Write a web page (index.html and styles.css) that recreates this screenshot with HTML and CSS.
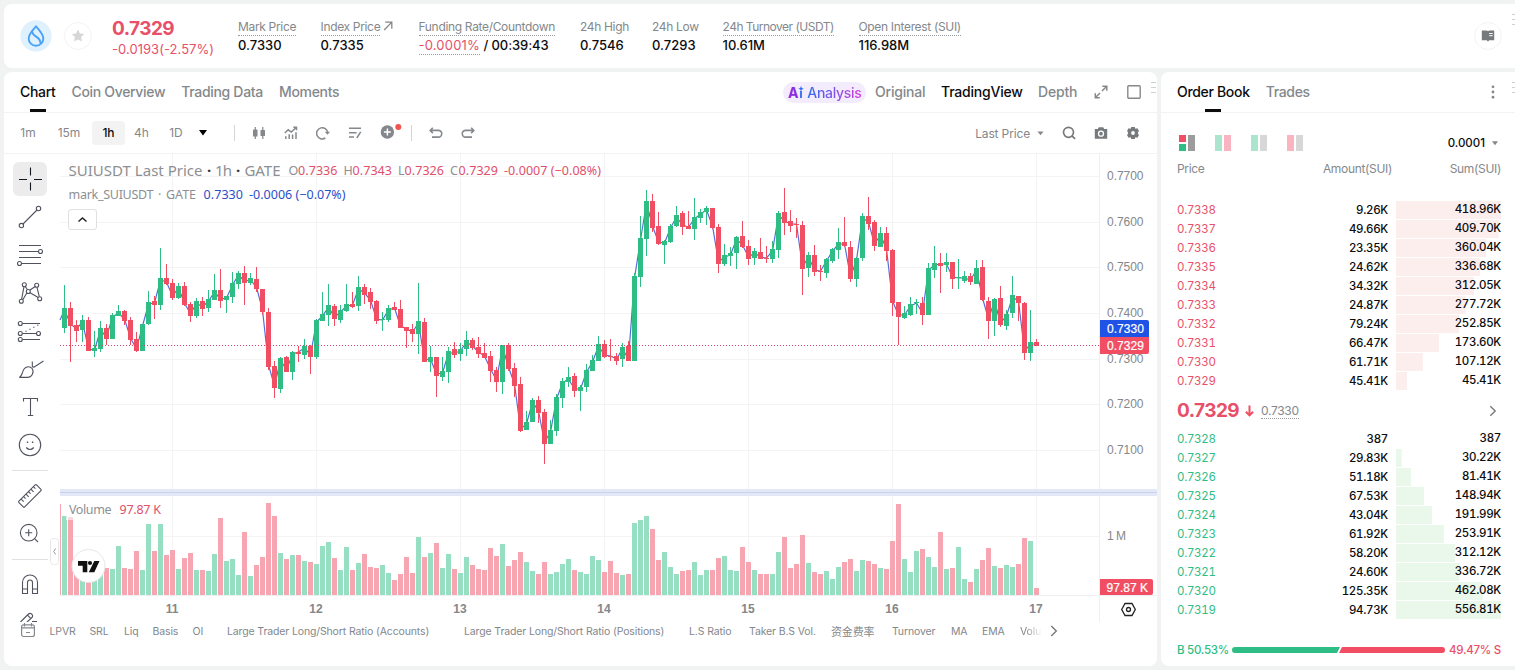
FILE: index.html
```html
<!DOCTYPE html>
<html lang="en">
<head>
<meta charset="utf-8">
<title>SUIUSDT 0.7329</title>
<link rel="stylesheet" href="styles.css">
</head>
<body>
<header class="card ticker">
  <svg class="coin" width="32" height="32" viewBox="0 0 32 32"><circle cx="16" cy="16" r="15.7" fill="#dff1fd"/><g fill="none" stroke="#4ba2f5" stroke-width="1.9" stroke-linejoin="round"><path d="M16 6.2c2.600 3.700 7.300 7.700 7.300 12.200a7.300 7.300 0 0 1-14.600 0C8.700 13.900 13.400 9.900 16 6.200z"/><path d="M12.600 11.600c-1.500 5 8.800 4.600 7.800 12.100"/></g></svg>
  <span class="round star"><svg width="14" height="14" viewBox="0 0 14 14"><path d="M7 .6l1.900 3.900 4.400.6-3.200 3 .8 4.300L7 10.400l-3.900 2 .8-4.300-3.200-3 4.400-.6z" fill="#d6d6d6"/></svg></span>
  <div class="last"><b>0.7329</b><span>-0.0193(-2.57%)</span></div>
  <div class="stats">
    <div><label class="dot">Mark Price</label><p>0.7330</p></div>
    <div><label><span class="dot">Index Price</span> <svg width="10" height="10" viewBox="0 0 10 10"><path d="M1.200 9L8.600 1.400M2.200 1.200h6.600v6.500" fill="none" stroke="#84888c" stroke-width="1.300"/></svg></label><p>0.7335</p></div>
    <div><label class="dot">Funding Rate/Countdown</label><p class="fund"><span class="dot red">-0.0001%</span> <span>/ 00:39:43</span></p></div>
    <div><label>24h High</label><p>0.7546</p></div>
    <div><label>24h Low</label><p>0.7293</p></div>
    <div><label class="dot tight">24h Turnover (USDT)</label><p>10.61M</p></div>
    <div><label class="dot">Open Interest (SUI)</label><p>116.98M</p></div>
  </div>
  <span class="round guide"><svg width="14" height="12" viewBox="0 0 14 12"><path d="M.8.600h4.400q1.300 0 1.800.7.500-.7 1.800-.7h4.400v9.600H8.300L7 11.400l-1.300-1.200H.8z" fill="#777a7d"/><path d="M8.200 3.500h3.500M8.200 5.700h3.500" stroke="#fff"/></svg></span>
  <svg class="grip" width="5" height="11" viewBox="0 0 5 11"><path d="M0 .5h5M0 5.500h5M0 10.500h5" stroke="#cfd2d5"/></svg>
</header>

<main>
<section class="card chart-card">
  <nav class="tabs">
    <a class="on">Chart</a><a>Coin Overview</a><a>Trading Data</a><a>Moments</a>
    <div class="views">
      <span class="ai"><span class="ai-logo">A<svg width="6" height="12" viewBox="0 0 6 12"><path d="M3 5v7" stroke="#2f6df0" stroke-width="1.800"/><path d="M3 0l.8 2 2 .8-2 .8L3 5.500l-.8-1.900-2-.8 2-.8z" fill="#2f6df0"/></svg></span><span class="ai-word">Analysis</span></span>
      <span class="v-orig">Original</span><span class="v-tv">TradingView</span><span class="v-depth">Depth</span>
      <svg class="v-exp" width="14" height="14" viewBox="0 0 14 14" fill="none" stroke="#84888c" stroke-width="1.500"><path d="M8 6l4.500-4.500M8.300 1.300h4.500v4.500M6 8L1.500 12.500M1.300 8.200v4.500h4.500"/></svg>
      <svg class="v-sq" width="14" height="14" viewBox="0 0 14 14"><rect x=".8" y=".8" width="12.400" height="12.400" rx="1" fill="none" stroke="#84888c" stroke-width="1.400"/></svg>
      <svg class="v-grip" width="5" height="11" viewBox="0 0 5 11"><path d="M0 .5h5M0 5.500h5M0 10.500h5" stroke="#cfd2d5"/></svg>
    </div>
  </nav>
  <div class="bar">
    <div class="frames"><span>1m</span><span>15m</span><span class="sel">1h</span><span>4h</span><span>1D</span></div>
    <svg class="caret" width="8" height="6" viewBox="0 0 8 6"><path d="M0 0h8L4 5.500z"/></svg>
    <i class="vr"></i>
    <svg width="14" height="14" viewBox="0 0 14 14" fill="#84888c"><rect x="1" y="3.500" width="4.500" height="7" rx=".6"/><rect x="2.700" y="1" width="1.200" height="12"/><rect x="8.500" y="4" width="4.500" height="6" rx=".6"/><rect x="10.200" y="1" width="1.200" height="12"/></svg>
    <svg width="14" height="14" viewBox="0 0 14 14" fill="none" stroke="#84888c" stroke-width="1.500"><path d="M.8 7l3.400-3.200 3 2.200 5-4.500M9.300 1.300h3.200v3M1.800 10.200V13M5.200 8.200V13M8.600 8.600V13M12 6.200V13"/></svg>
    <svg width="14" height="14" viewBox="0 0 14 14" fill="none" stroke="#84888c" stroke-width="1.500"><path d="M9.300 12a5.600 5.600 0 1 1 2.500-5"/><path d="M8.800 5.700h5.200l-2.500 3.100z" fill="#84888c" stroke="none"/></svg>
    <svg width="14" height="14" viewBox="0 0 14 14" fill="none" stroke="#84888c" stroke-width="1.500"><path d="M1 2.300h12M1 6.700h7.600M1 11.100h5M8.800 12l3.900-6.200"/></svg>
    <svg class="plus" width="23" height="18" viewBox="0 0 23 18"><circle cx="7.400" cy="11" r="6.700" fill="#84888c"/><path d="M7.400 7.500v7M3.900 11h7" stroke="#fff" stroke-width="1.500"/><circle cx="18.300" cy="6" r="3" fill="#f0564f"/></svg>
    <i class="vr two"></i>
    <svg width="14" height="12" viewBox="0 0 14 12" fill="none" stroke="#84888c" stroke-width="1.600"><path d="M3.800.7L1.200 3.400l2.600 2.700M1.400 3.400h8a3.300 3.300 0 0 1 0 6.700H3"/></svg>
    <svg width="14" height="12" viewBox="0 0 14 12" fill="none" stroke="#84888c" stroke-width="1.600"><path d="M10.200.7l2.600 2.700-2.600 2.700M12.600 3.400h-8a3.300 3.300 0 0 0 0 6.700H11"/></svg>
    <div class="right">
      <span>Last Price</span>
      <svg width="7" height="5" viewBox="0 0 7 5"><path d="M.5.5h6l-3 3.700z" fill="#84888c"/></svg>
      <svg width="14" height="14" viewBox="0 0 14 14" fill="none" stroke="#777a7d" stroke-width="1.700"><circle cx="6.500" cy="6.300" r="5"/><path d="M10 9.800l3 3"/></svg>
      <svg width="14" height="14" viewBox="0 0 14 14"><path d="M.8 3h3l1-1.800h4.400l1 1.800h3v9.800H.8z" fill="#777a7d"/><circle cx="7" cy="7.700" r="2.500" fill="none" stroke="#fff" stroke-width="1.300"/></svg>
      <svg width="14" height="14" viewBox="0 0 14 14"><path d="M5.200 1h3.600l.5 1.700 2.100-.4 1.500 2.500L11.800 7l1.100 2.200-1.500 2.500-2.100-.4-.5 1.700H5.200l-.5-1.700-2.100.4L1.100 9.200 2.200 7 1.100 4.800l1.500-2.500 2.100.4z" fill="#777a7d"/><circle cx="7" cy="7" r="1.900" fill="#fff"/></svg>
    </div>
  </div>
  <div class="body">
    <div class="tools">
      <svg class="active" viewBox="0 0 34 34"><path d="M17.500 5.500v8M17.500 20.500v8M6 17.500h8M21 17.500h8"/></svg>
      <svg viewBox="0 0 34 34"><path d="M10 24L24 10"/><circle cx="8.400" cy="25.600" r="2.200"/><circle cx="25.500" cy="8.500" r="2.200"/></svg>
      <svg viewBox="0 0 34 34"><path d="M6 7.500h22M6 13.500h19.500M6 19.500h22M8.500 25.500H28"/><circle cx="27.500" cy="13.500" r="2"/><circle cx="6.500" cy="25.500" r="2"/></svg>
      <svg viewBox="0 0 34 34"><path d="M8.600 23.300L11 10.700M12.300 10.500l2 3M9.800 23.700l4-6.700M17 14l5.200-3.500M17 16.800l8.200 4.700M24 11.300l2.300 9.400"/><circle cx="8.300" cy="25.300" r="2"/><circle cx="11.300" cy="8.700" r="2"/><circle cx="15.300" cy="15.500" r="2"/><circle cx="23.700" cy="9.300" r="2"/><circle cx="26.700" cy="22.700" r="2"/></svg>
      <svg viewBox="0 0 34 34"><path d="M9.500 9.500h17.500M9.500 19.500h14M9.500 25.500h17.500"/><path d="M12.500 17.500L27 10" stroke-dasharray="1.200 3.200"/><circle cx="7.300" cy="9.500" r="2"/><circle cx="7.300" cy="19.500" r="2"/><circle cx="25.500" cy="19.500" r="2"/><circle cx="7.300" cy="25.500" r="2"/></svg>
      <svg viewBox="0 0 34 34"><path d="M6.300 25.400c3-1.200 2.800-5.500 4.600-8.200 2-3 6.300-3.200 8.200-.7 2.200 3 .4 8.700-4.600 8.900zM19.300 9.500v4.300q.3 1.700 2 1.200L30.500 9"/></svg>
      <svg viewBox="0 0 34 34"><path d="M10.500 11.500v-3h14v3M17.500 8.500v17M14.800 25.500h5.400"/></svg>
      <svg viewBox="0 0 34 34"><circle cx="17" cy="17" r="10.700"/><path d="M13.200 19.500q3.800 4 7.600 0"/><path d="M13.800 14.300h1.400M18.900 14.300h1.400" stroke-width="1.400"/></svg>
      <hr>
      <svg viewBox="0 0 34 34"><g transform="rotate(-45 17 17)"><rect x="4.500" y="12.800" width="25" height="8.200" rx="1"/><path d="M8.500 13v3.600M12 13v2.700M15.500 13v3.600M19 13v2.700M22.500 13v3.600M26 13v2.700"/></g></svg>
      <svg viewBox="0 0 34 34"><circle cx="15.700" cy="15.700" r="8.300"/><path d="M21.800 21.800l3.200 3.200M15.700 12.200v7M12.200 15.700h7"/></svg>
      <hr>
      <svg viewBox="0 0 34 34"><path d="M9.500 25.500v-11a7.500 7.500 0 0 1 15 0v11h-5v-11a2.500 2.500 0 0 0-5 0v11zM9.500 21h5M19.500 21h5"/></svg>
      <svg viewBox="0 0 34 34"><path d="M7.500 16l8-8q1.500-1.500 3.200.2t.2 3.300l-6.400 6M14.500 9.200l3.200 3.200M19 15.500h5"/></svg>
    </div>
    <svg class="plot" id="plot" width="1107" height="468" viewBox="50 154 1107 468">
      <g id="grid" stroke="#f4f4f5"></g>
      <path d="M1099.500 154V622M60 595.500h1097" stroke="#eeeff0"/>
      <g id="volume"></g>
      <rect x="60" y="489" width="1097" height="7" fill="#e2e8f7"/><path d="M60 492.500h1097" stroke="#c9d2ea"/>
      <path id="mark" fill="none" stroke="#5470d8" stroke-width="1.200"/>
      <g id="candles"></g>
      <path d="M60 345.500h1039" stroke="#d9456a" stroke-dasharray="1 2"/>
      <g class="legend">
        <text x="68.500" y="176" class="t15" textLength="134">SUIUSDT Last Price</text><text x="207" y="176" class="t15 dk">·</text><text x="215" y="176" class="t15" textLength="17">1h</text><text x="236" y="176" class="t15 dk">·</text><text x="244.500" y="176" class="t15" textLength="36">GATE</text>
        <text x="288.500" y="175" class="t13" textLength="9.500">O</text><text x="298" y="175" class="t13 r" textLength="39.500">0.7336</text>
        <text x="343.500" y="175" class="t13" textLength="9">H</text><text x="352.500" y="175" class="t13 r" textLength="39.500">0.7343</text>
        <text x="398" y="175" class="t13" textLength="6.500">L</text><text x="404.500" y="175" class="t13 r" textLength="39.500">0.7326</text>
        <text x="450" y="175" class="t13" textLength="8.500">C</text><text x="458.500" y="175" class="t13 r" textLength="39.500">0.7329</text>
        <text x="504" y="175" class="t13 r" textLength="97">-0.0007 (−0.08%)</text>
        <text x="68.500" y="199" class="t13" textLength="85">mark_SUIUSDT</text><text x="158" y="199" class="t13">·</text><text x="166" y="199" class="t13" textLength="30">GATE</text>
        <text x="203.500" y="199" class="t13 b" textLength="39.500">0.7330</text><text x="249" y="199" class="t13 b" textLength="96.500">-0.0006 (−0.07%)</text>
        <rect x="68.500" y="209.500" width="28" height="20" rx="2.500" fill="#fff" stroke="#dfe0e2"/><path d="M78.500 221.500l4-3.500 4 3.500" fill="none" stroke="#222" stroke-width="1.500"/>
        <rect x="66" y="500" width="98" height="20" fill="#fff" opacity=".6"/>
        <text x="69" y="514" class="t13" textLength="42.500">Volume</text><text x="119.500" y="514" class="t13 r" textLength="41.500">97.87 K</text>
      </g>
      <circle cx="88.500" cy="566" r="16.500" fill="#fff" stroke="#e6e6e8"/>
      <path d="M78 561h9.300v11.300h-4.600v-6.600H78zM94.300 561H99.500l-5.200 11.300h-5.500z" fill="#111"/><circle cx="90" cy="563" r="2.100" fill="#111"/>
      <g><rect x="50.500" y="538.500" width="8" height="26" rx="3" fill="#fff" stroke="#e6e7e9"/><path d="M55.700 548.500l-2 3 2 3" fill="none" stroke="#999"/></g>
      <g id="axis" class="axis"></g>
      <path d="M1100 320h47q2 0 2 2v15h-49z" fill="#1e53e5"/><path d="M1100 337h49v15q0 2-2 2h-47z" fill="#f24e63"/>
      <g class="tag"><text x="1107" y="333" textLength="37">0.7330</text><text x="1107" y="350" textLength="37">0.7329</text>
      <path d="M1100 579h51q2 0 2 2v12q0 2-2 2h-51z" fill="#f24e63"/><text x="1106.500" y="592" textLength="41.500">97.87 K</text></g>
      <path d="M1121.700 609.500l3.300-6h7l3.300 6-3.300 6h-7z" fill="none" stroke="#222" stroke-width="1.300"/><circle cx="1128.500" cy="609.500" r="2" fill="none" stroke="#222" stroke-width="1.300"/>
    </svg>
  </div>
  <div class="inds">
    <svg class="cal" width="16" height="16" viewBox="0 0 16 16" fill="none" stroke="#84888c" stroke-width="1.200"><rect x="1.600" y="2.800" width="12.800" height="11.700" rx="2"/><path d="M4.500 1v3.500M11.500 1v3.500M2 5.800h12M6 10.500h4"/></svg>
    <span>LPVR</span><span>SRL</span><span>Liq</span><span>Basis</span><span>OI</span><span>Large Trader Long/Short Ratio (Accounts)</span><span>Large Trader Long/Short Ratio (Positions)</span><span>L.S Ratio</span><span>Taker B.S Vol.</span><span class="cjk">资金费率</span><span>Turnover</span><span>MA</span><span>EMA</span><span class="fade">Volu</span>
    <svg width="8" height="12" viewBox="0 0 8 12"><path d="M1.300 1l5 5-5 5" fill="none" stroke="#777a7d" stroke-width="1.400"/></svg>
  </div>
</section>

<section class="card book">
  <nav class="tabs"><a class="on">Order Book</a><a>Trades</a>
    <svg class="dots" width="4" height="14" viewBox="0 0 4 14" fill="#84888c"><circle cx="2" cy="1.800" r="1.400"/><circle cx="2" cy="7" r="1.400"/><circle cx="2" cy="12.200" r="1.400"/></svg>
    <svg class="b-grip" width="5" height="11" viewBox="0 0 5 11"><path d="M0 .5h5M0 5.500h5M0 10.500h5" stroke="#cfd2d5"/></svg>
  </nav>
  <div class="modes">
    <svg width="16" height="16" viewBox="0 0 16 16"><path d="M0 0h7v7H0z" fill="#f24e63"/><path d="M0 9h7v7H0z" fill="#2ebd85"/><path d="M9 0h7v16H9z" fill="#9c9c9c"/></svg>
    <svg width="16" height="16" viewBox="0 0 16 16"><path d="M0 0h7v16H0z" fill="#abe5ce"/><path d="M9 0h7v16H9z" fill="#fab3c0"/></svg>
    <svg width="16" height="16" viewBox="0 0 16 16"><path d="M0 0h7v16H0z" fill="#abe5ce"/><path d="M9 0h7v16H9z" fill="#d7d7d7"/></svg>
    <svg width="16" height="16" viewBox="0 0 16 16"><path d="M0 0h7v16H0z" fill="#fab3c0"/><path d="M9 0h7v16H9z" fill="#d7d7d7"/></svg>
    <span>0.0001</span><svg width="6" height="5" viewBox="0 0 6 5"><path d="M0 .300h6L3 4.300z" fill="#84888c"/></svg>
  </div>
  <div class="heads"><span>Price</span><span>Amount(SUI)</span><span>Sum(SUI)</span></div>
  <div class="rows asks" id="asks"></div>
  <div class="mid"><b>0.7329</b><svg width="9" height="12" viewBox="0 0 9 12"><path d="M4.500.5v9M.9 6.700l3.600 3.700 3.600-3.700" fill="none" stroke="#f24e63" stroke-width="2"/></svg><span class="dot">0.7330</span><svg class="go" width="8" height="12" viewBox="0 0 8 12"><path d="M1.300 1.200L6.200 6l-4.900 4.800" fill="none" stroke="#777a7d" stroke-width="1.400"/></svg></div>
  <div class="rows bids" id="bids"></div>
  <div class="ratio"><span class="green">B 50.53%</span><svg width="213" height="6" viewBox="0 0 213 6"><path d="M3 0h105l-3 6H3a3 3 0 0 1 0-6z" fill="#2ebd85"/><path d="M110 0h100a3 3 0 0 1 0 6H107z" fill="#f24e63"/></svg><span class="red">49.47% S</span></div>
</section>
</main>
<script src="script.js"></script>
</body>
</html>
```
FILE: styles.css
```css
* { box-sizing: border-box; }
body { margin: 0; width: 1515px; height: 670px; overflow: hidden; background: #f1f2f2; padding: 4px 0 4px 4px; font-family: Inter, "Liberation Sans", sans-serif; color: #0c0c0e; display: flex; flex-direction: column; gap: 4px; }
svg { display: block; flex: none; }
p { margin: 0; }
.card { background: #fff; border-radius: 8px; }
.red { color: #e8506a; }
.green { color: #2ebd85; }
.dot { border-bottom: 1px dotted #9a9da0; }

.ticker { height: 64px; border-radius: 8px 0 0 8px; display: flex; align-items: flex-start; flex: none; }
.coin { margin: 16px 0 0 16px; }
.round { width: 28px; height: 28px; border-radius: 50%; border: 1px solid #f3f3f4; display: flex; align-items: center; justify-content: center; flex: none; }
.star { margin: 18px 0 0 12px; }
.last { width: 126px; margin: 13px 0 0 20px; color: #e8506a; display: flex; flex-direction: column; white-space: nowrap; }
.last b { font-size: 19px; line-height: 23px; font-weight: 700; letter-spacing: -.55px; }
.last span { font-size: 13px; line-height: 19px; letter-spacing: .05px; }
.stats { display: grid; grid-template-columns: 82.500px 98px 161.500px 72px 70.500px 136px 120px; margin-top: 15px; font-size: 12px; white-space: nowrap; }
.stats label { display: inline-block; color: #84888c; line-height: 14px; height: 16px; letter-spacing: -.33px; }
.stats .tight { letter-spacing: -.5px; }
.stats label > .dot { display: inline-block; height: 16px; }
.stats label svg { display: inline-block; }
.stats p { font-size: 13px; line-height: 18px; font-weight: 500; }
.fund .dot { display: inline-block; font-weight: 400; letter-spacing: .2px; }
.fund span + span { letter-spacing: -.1px; }
.guide { margin: 18px 0 0 auto; }
.grip { margin: 10px -2px 0 10px; }

main { display: flex; gap: 4px; height: 594px; }
.chart-card { width: 1153px; display: flex; flex-direction: column; overflow: hidden; }
.tabs { height: 41px; border-bottom: 1px solid #f3f3f4; display: flex; align-items: center; padding-left: 16px; gap: 16px; font-size: 14px; font-weight: 500; color: #84888c; white-space: nowrap; letter-spacing: -.32px; flex: none; }
.tabs a { line-height: 40px; height: 40px; }
.tabs .on { color: #0c0c0e; background: linear-gradient(#0c0c0e, #0c0c0e) center bottom / 16px 3px no-repeat; }
.views { margin-left: auto; display: flex; align-items: center; letter-spacing: -.2px; }
.views > span { line-height: 19px; height: 21px; }
.ai { width: 83px; border-radius: 11px; background: #f3ecfc; display: flex; align-items: center; padding-left: 5px; margin-right: 9px; gap: 3px; }
.ai-logo { display: flex; align-items: center; font-weight: 700; color: #8a2be2; }
.ai-word { letter-spacing: -.3px; background: linear-gradient(90deg, #2f6df0, #d63be0); -webkit-background-clip: text; background-clip: text; color: transparent; }
.v-orig { width: 66px; }
.v-tv { width: 97px; color: #0c0c0e; }
.v-depth { width: 56px; }
.v-sq { margin-left: 19px; }
.v-grip { margin: -10px 1px 0 10px; }

.bar { height: 41px; border-bottom: 1px solid #f3f3f4; display: flex; align-items: center; font-size: 12px; color: #84888c; gap: 18px; flex: none; }
.frames { display: grid; grid-template-columns: 36px 46px 33px 33px 36px; padding-left: 6px; text-align: center; line-height: 24px; width: 191px; }
.frames .sel { background: #f3f3f4; border-radius: 4px; color: #0c0c0e; font-weight: 500; }
.caret { margin-left: -14px; }
.vr { width: 1px; height: 16px; background: #d2d4d6; margin: 0 -1px 0 9px; }
.plus { margin: -6px -9px 0 0; }
.vr.two { margin: 0 -1px 0 -1px; }
.right { margin-left: auto; display: flex; align-items: center; gap: 18px; padding-right: 17px; letter-spacing: -.15px; }
.right span { margin-right: -11px; }

.body { display: flex; height: 468px; flex: none; }
.tools { width: 46px; padding: 8px 0 0 9px; overflow: hidden; flex: none; }
.tools svg { width: 34px; height: 34px; margin-bottom: 4px; fill: none; stroke: #50535e; stroke-width: 1.100; }
.tools .active { background: #ececed; border-radius: 6px; stroke: #131722; }
.tools hr { width: 36px; height: 1px; border: 0; background: #e0e1e3; margin: 8px 0 8px -1px; }
.legend { font-family: "Noto Sans", "Open Sans", sans-serif; fill: #8d8f92; }
.t15 { font-size: 15px; }
.t13 { font-size: 12.500px; }
.dk { fill: #333; font-weight: 700; }
.r { fill: #e0506a; }
.b { fill: #2a50c8; }
.axis, .tag { font-family: "Liberation Sans", sans-serif; font-size: 12px; fill: #85878a; }
.axis .day { font-weight: 700; }
.tag { fill: #fff; stroke: #fff; stroke-width: .2; }
.tag path { stroke: none; }
.inds { height: 18px; display: grid; grid-template-columns: 45.500px 40px 34.500px 28.500px 40px 34.500px 237px 225px 60px 82px 61px 59px 31px 38px 30px 20px; align-items: center; font-size: 10.500px; color: #84888c; white-space: nowrap; }
.inds .cal { margin: -2px 0 0 16px; }
.inds .cjk { font-family: "Noto Sans CJK SC", sans-serif; font-size: 11px; line-height: 16px; }
.inds span { letter-spacing: -.13px; }
.fade { width: 22px; overflow: hidden; -webkit-mask-image: linear-gradient(90deg, #000 30%, transparent); mask-image: linear-gradient(90deg, #000 30%, transparent); }

.book { flex: 1; border-radius: 8px 0 0 8px; font-size: 12px; }
.dots { margin-left: auto; }
.b-grip { margin: -10px -2px 0 1px; }
.modes { height: 16px; margin: 22px 17px 0 18px; display: flex; align-items: center; gap: 20px; }
.modes span { margin-left: auto; margin-right: -13px; font-weight: 500; font-size: 11.500px; }
.heads { display: grid; grid-template-columns: 100px 115px 109px; margin: 10px 0 0 16px; line-height: 16px; color: #84888c; letter-spacing: -.33px; }
.heads span + span { text-align: right; }
.rows div { display: grid; grid-template-columns: 100px 111px 8px 105px; margin-left: 16px; height: 19px; line-height: 19px; font-weight: 500; font-size: 11.500px; font-variant-numeric: tabular-nums; letter-spacing: -.28px; }
.rows span { text-align: right; }
.rows span:first-child { text-align: left; font-weight: 400; letter-spacing: -.3px; }
.rows span:last-child { grid-column: 4; height: 18px; line-height: 17px; background-repeat: no-repeat; background-position: left top; }
.asks { margin-top: 24px; }
.asks span:first-child { color: #e8506a; }
.asks span:last-child { background-image: linear-gradient(#fdeeee, #fdeeee); }
.bids span:first-child { color: #2ebd85; }
.bids span:last-child { background-image: linear-gradient(#e9f8ea, #e9f8ea); }
.mid { height: 39px; display: flex; align-items: center; padding: 0 18px 0 16px; }
.mid b { font-size: 19px; font-weight: 700; color: #e8506a; width: 68px; letter-spacing: -.55px; }
.mid .dot { margin-left: 7px; color: #84888c; line-height: 15px; letter-spacing: -.3px; }
.mid .go { margin-left: auto; }
.ratio { display: flex; align-items: center; margin: 21px 14px 0 16px; justify-content: space-between; line-height: 18px; font-size: 11.500px; font-weight: 500; white-space: nowrap; letter-spacing: -.25px; width: 324px; }
```
FILE: script.js
```js
// One entry per hour: direction, high, body top, body bottom, low, volume height.
const bars = `
G,285,308,328,333,79 R,302,308,326,362,78 R,320,325,331,342,22 G,315,320,330,342,20 R,317,320,351,351,18 G,331,348,351,357,20 G,321,328,349,352,24 R,324,328,339,345,27 G,313,315,339,339,26 G,305,311,316,316,49
R,310,311,321,325,27 R,317,320,340,345,26 R,332,339,351,352,44 G,324,324,351,351,25 G,291,302,324,325,71 R,296,301,305,319,44 G,248,278,305,310,71 R,264,278,284,285,40 R,279,283,298,300,45 G,283,286,298,299,26
R,282,286,305,306,37 R,302,304,316,322,42 G,298,301,316,318,25 R,297,301,309,316,25 G,290,299,308,312,24 G,274,290,300,300,41 R,269,290,301,308,77 G,296,296,300,313,34 G,272,283,297,303,36 G,271,273,284,289,20
R,266,273,283,305,63 G,273,278,283,285,19 R,267,279,289,292,30 R,289,289,312,315,38 R,308,312,367,370,92 R,361,366,388,398,79 G,357,358,389,393,42 R,356,357,372,372,36 G,351,352,372,380,40 R,346,352,354,362,40
G,339,346,355,359,34 R,345,346,357,374,33 G,319,320,357,359,31 G,292,314,321,321,49 G,284,305,315,326,53 R,304,306,319,326,37 G,305,310,320,323,25 G,284,304,311,312,48 R,292,304,307,308,25 G,276,287,306,311,32
R,284,287,295,304,41 R,288,292,302,309,28 R,300,301,321,324,27 G,312,319,320,331,30 G,305,308,320,322,22 R,302,307,310,310,15 R,300,309,328,328,21 R,327,327,331,348,38 R,324,329,334,342,22 G,283,321,334,354,58
R,318,322,362,362,38 G,346,357,362,372,42 R,357,357,376,397,52 G,357,371,377,381,27 G,347,351,372,383,41 R,342,349,355,358,26 G,343,349,354,361,22 G,331,340,349,356,38 R,338,340,348,350,30 R,337,347,354,358,26
R,343,353,358,358,25 R,351,356,371,382,47 R,367,370,382,392,39 G,345,345,382,394,51 R,343,345,369,371,29 R,363,368,386,397,35 R,377,384,431,432,43 G,411,422,430,430,33 G,398,400,422,422,24 R,396,400,413,423,21
R,409,412,444,464,33 G,420,430,444,444,21 G,394,397,431,436,23 G,378,381,398,408,31 G,367,377,382,387,36 R,373,376,391,397,25 G,385,387,391,411,23 G,364,370,387,392,21 G,355,360,371,371,39 G,336,344,361,361,35
R,340,344,357,358,23 R,339,356,357,361,34 R,353,356,361,365,22 G,343,347,359,367,20 R,341,346,361,361,21 G,273,276,361,361,72 G,216,238,277,287,75 G,190,201,239,256,79 R,194,201,228,232,66 R,212,226,244,245,35
G,240,241,245,264,43 G,224,226,242,243,28 G,206,215,226,227,21 R,211,213,227,235,24 R,211,226,229,229,25 G,198,217,229,240,33 G,209,212,218,223,20 G,206,208,212,225,25 R,208,208,228,229,25 R,224,227,264,273,37
G,244,255,264,266,39 G,247,253,256,266,25 G,236,237,253,269,24 R,221,236,247,248,48 R,240,246,259,265,33 G,248,251,258,265,25 R,238,252,259,259,21 R,246,258,259,263,21 G,241,249,259,263,21 G,211,213,250,258,43
R,188,212,223,235,58 R,210,221,226,232,27 R,218,224,225,238,31 R,221,225,269,295,60 G,252,255,268,277,32 R,245,255,272,276,23 R,265,271,272,281,21 G,258,259,273,278,24 G,248,249,261,263,16 G,228,242,250,259,28
R,217,242,246,247,33 R,241,247,279,282,36 G,257,258,279,287,24 G,213,216,258,261,35 R,197,216,224,230,34 R,220,222,246,251,31 G,227,233,247,247,27 R,227,233,251,261,26 R,249,250,303,316,54 R,302,302,317,345,91
G,306,313,318,319,36 G,297,304,315,316,23 G,299,302,303,314,44 R,297,303,315,325,46 G,263,268,315,315,38 G,246,263,270,278,28 R,253,263,266,293,63 G,253,262,265,272,26 R,262,262,279,289,27 G,259,277,278,289,48
G,271,276,281,283,16 R,273,276,282,285,13 G,260,268,284,284,26 R,260,267,300,301,35 R,297,301,321,339,47 G,298,299,321,336,29 R,286,298,325,327,27 G,310,314,326,330,30 G,276,295,313,318,28 R,296,296,303,321,31
R,302,303,353,360,57 G,310,342,353,361,54 R,339,342,346,346,7`.trim().split(/\s+/);

let candles = '', volume = '<rect x="60" y="504" width="1" height="91" fill="#f8a5b2"/>', mark = 'M60 320';
bars.forEach((bar, i) => {
  const [dir, high, top, bottom, low, vol] = bar.split(',').map((v, k) => k ? +v : v);
  const x = 62 + i * 6, up = dir === 'G', color = up ? '#2ebd85' : '#f24e63';
  candles += `<path d="M${x} ${top}h5v${bottom - top}h-5zM${x + 2} ${high}h1v${low - high}h-1z" fill="${color}"/>`;
  volume += `<rect x="${x}" y="${595 - vol}" width="5" height="${vol}" fill="${up ? '#97dfc3' : '#f8a5b2'}"/>`;
  const close = up ? Math.min(top + 2, bottom) : Math.max(bottom - 2, top);
  mark += `L${x + 2.5} ${close}`;
});
document.getElementById('candles').innerHTML = candles;
document.getElementById('volume').innerHTML = volume;
document.getElementById('mark').setAttribute('d', mark);

let grid = '', axis = '';
['0.7700', '0.7600', '0.7500', '0.7400', '0.7300', '0.7200', '0.7100'].forEach((label, i) => {
  const y = Math.round(176 + i * 45.65);
  grid += `<path d="M60 ${y + .5}H1099"/>`;
  axis += `<text x="1107" y="${y + 4}" textLength="36.5">${label}</text>`;
});
grid += '<path d="M60 536.5H1099"/>';
axis += '<text x="1107" y="540" textLength="19">1 M</text>';
for (let i = 0; i < 7; i++) {
  const x = 172.5 + i * 144;
  grid += `<path d="M${x} 154V595"/>`;
  axis += `<text class="day" x="${x - .5}" y="613" text-anchor="middle">${11 + i}</text>`;
}
document.getElementById('grid').innerHTML = grid;
document.getElementById('axis').innerHTML = axis;

const asks = [['0.7338', '9.26K', '418.96K'], ['0.7337', '49.66K', '409.70K'], ['0.7336', '23.35K', '360.04K'], ['0.7335', '24.62K', '336.68K'], ['0.7334', '34.32K', '312.05K'], ['0.7333', '24.87K', '277.72K'], ['0.7332', '79.24K', '252.85K'], ['0.7331', '66.47K', '173.60K'], ['0.7330', '61.71K', '107.12K'], ['0.7329', '45.41K', '45.41K']];
const bids = [['0.7328', '387', '387'], ['0.7327', '29.83K', '30.22K'], ['0.7326', '51.18K', '81.41K'], ['0.7325', '67.53K', '148.94K'], ['0.7324', '43.04K', '191.99K'], ['0.7323', '61.92K', '253.91K'], ['0.7322', '58.20K', '312.12K'], ['0.7321', '24.60K', '336.72K'], ['0.7320', '125.35K', '462.08K'], ['0.7319', '94.73K', '556.81K']];
function fill(id, rows, total) {
  document.getElementById(id).innerHTML = rows.map(([price, amount, sum]) => {
    const share = sum.endsWith('K') ? parseFloat(sum) / total * 100 : 0;
    return `<div><span>${price}</span><span>${amount}</span><span style="background-size:${share.toFixed(1)}% 100%">${sum}</span></div>`;
  }).join('');
}
fill('asks', asks, 418.96);
fill('bids', bids, 556.81);
```
